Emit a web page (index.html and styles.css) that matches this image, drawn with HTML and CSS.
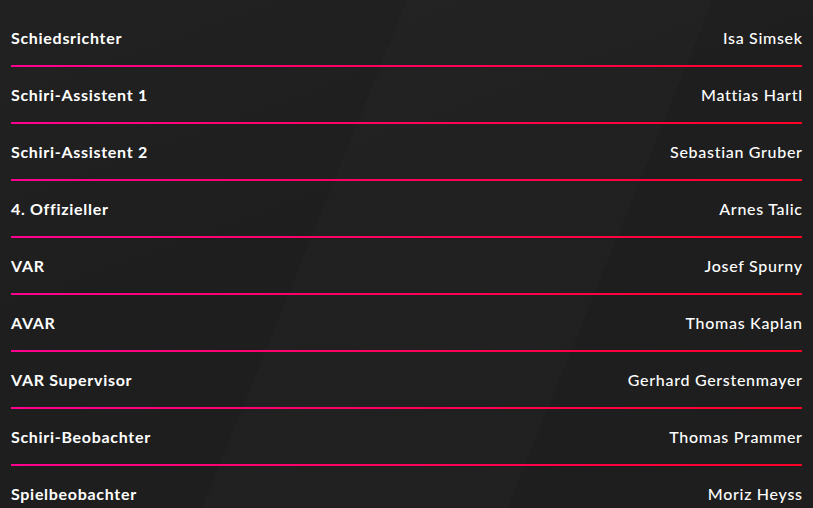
FILE: index.html
```html
<!DOCTYPE html>
<html lang="de">
<head>
    <meta charset="UTF-8" />
    <meta name="viewport" content="width=device-width, initial-scale=1.0" />
    <title>Schiedsrichter</title>
    <link rel="stylesheet" href="styles.css">
</head>
<body>
    <div class="officials">
        <!-- Referee list -->
        <div class="row"><span class="role">Schiedsrichter</span><span class="name">Isa Simsek</span></div>
        <div class="row"><span class="role">Schiri-Assistent 1</span><span class="name">Mattias Hartl</span></div>
        <div class="row"><span class="role">Schiri-Assistent 2</span><span class="name">Sebastian Gruber</span></div>
        <div class="row"><span class="role">4. Offizieller</span><span class="name">Arnes Talic</span></div>
        <div class="row"><span class="role">VAR</span><span class="name">Josef Spurny</span></div>
        <div class="row"><span class="role">AVAR</span><span class="name">Thomas Kaplan</span></div>
        <div class="row"><span class="role">VAR Supervisor</span><span class="name">Gerhard Gerstenmayer</span></div>
        <div class="row"><span class="role">Schiri-Beobachter</span><span class="name">Thomas Prammer</span></div>
        <div class="row last"><span class="role">Spielbeobachter</span><span class="name">Moriz Heyss</span></div>
    </div>
</body>
</html>
```

FILE: styles.css
```css
body {
    margin: 0;
    padding: 10px 11px 0 11px;
    height: 508px;
    box-sizing: border-box;
    overflow: hidden;
    font-family: Lato, "Noto Sans", sans-serif;
    color: #ffffff;
    background-color: #1e1e1e;
    background-image:
        linear-gradient(112deg, transparent 0%, transparent 40%, rgba(255, 255, 255, 0.012) 40%, rgba(255, 255, 255, 0.012) 70%, transparent 70%),
        linear-gradient(160deg, rgba(255, 255, 255, 0.015) 0%, transparent 45%);
}
.officials {
    display: flex;
    flex-direction: column;
}
.row {
    display: flex;
    justify-content: space-between;
    align-items: center;
    height: 55px;
    padding-bottom: 2px;
    font-size: 16px;
    letter-spacing: 0.7px;
    background-image: linear-gradient(90deg, #ff0090, #ff0028);
    background-size: 100% 2px;
    background-position: bottom;
    background-repeat: no-repeat;
}
.row.last {
    background: none;
}
.role {
    font-weight: 700;
}
.name {
    font-weight: 500;
    margin-right: -0.7px;
}
```
